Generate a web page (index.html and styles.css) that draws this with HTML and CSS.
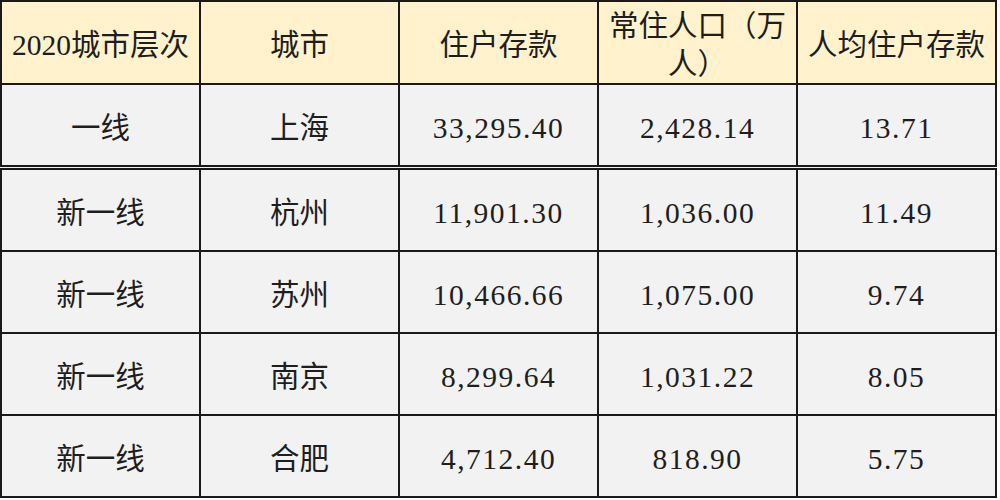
FILE: index.html
```html
<!DOCTYPE html>
<html lang="zh-CN">
<head>
<meta charset="utf-8">
<link rel="stylesheet" href="styles.css">
</head>
<body>
<table class="grid">
  <colgroup>
    <col class="c"><col class="c"><col class="c"><col class="c"><col class="c">
  </colgroup>
  <thead>
    <tr class="head">
      <th>2020城市层次</th>
      <th>城市</th>
      <th>住户存款</th>
      <th>常住人口（万人）</th>
      <th>人均住户存款</th>
    </tr>
  </thead>
  <tbody>
    <tr class="row first">
      <td>一线</td><td>上海</td><td class="num">33,295.40</td><td class="num">2,428.14</td><td class="num">13.71</td>
    </tr>
    <tr class="row">
      <td>新一线</td><td>杭州</td><td class="num">11,901.30</td><td class="num">1,036.00</td><td class="num">11.49</td>
    </tr>
    <tr class="row">
      <td>新一线</td><td>苏州</td><td class="num">10,466.66</td><td class="num">1,075.00</td><td class="num">9.74</td>
    </tr>
    <tr class="row">
      <td>新一线</td><td>南京</td><td class="num">8,299.64</td><td class="num">1,031.22</td><td class="num">8.05</td>
    </tr>
    <tr class="row">
      <td>新一线</td><td>合肥</td><td class="num">4,712.40</td><td class="num">818.90</td><td class="num">5.75</td>
    </tr>
  </tbody>
</table>
</body>
</html>
```
FILE: styles.css
```css
html, body {
  margin: 0;
  padding: 0;
  background: #ffffff;
}

.grid {
  border-collapse: collapse;
  table-layout: fixed;
  width: 996px;
  margin: 0;
  font-family: "Liberation Serif", "Noto Sans CJK SC", serif;
  font-size: 29.5px;
  color: #1e1e1e;
}

.c {
  width: 199px;
}

.grid th,
.grid td {
  border: 2px solid #1a1a1a;
  text-align: center;
  vertical-align: middle;
  padding: 5px 3px 0 3px;
  font-weight: normal;
}

.head th {
  background: #fff2cc;
  height: 74px;
  line-height: 38px;
}

.row td {
  background: #f2f2f2;
  height: 75px;
  line-height: 36px;
}

.row.first td {
  border-bottom: 5px double #1a1a1a;
}

.num {
  letter-spacing: 1.5px;
}
```
